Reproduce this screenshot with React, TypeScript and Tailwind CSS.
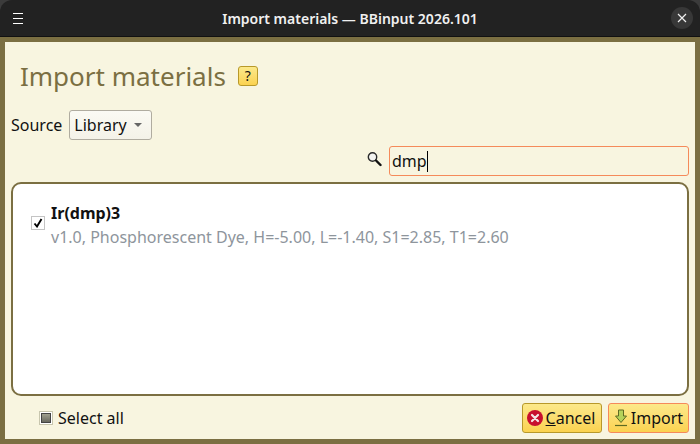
import React from 'react';

const font = { fontFamily: '"Noto Sans", sans-serif' };

const SearchIcon = () => (
  <svg width="16" height="16" viewBox="0 0 16 16" fill="none">
    <circle cx="6.5" cy="6" r="4.2" stroke="#2b2b2b" strokeWidth="1.4" fill="#f4f4f0" />
    <path d="M10 9.5 L14.5 14" stroke="#111" strokeWidth="2.4" strokeLinecap="round" />
  </svg>
);

const CancelIcon = () => (
  <svg width="16" height="16" viewBox="0 0 16 16">
    <circle cx="8" cy="8" r="8" fill="#c8102e" />
    <path d="M5 5 L11 11 M11 5 L5 11" stroke="#f4e6e6" strokeWidth="2.2" strokeLinecap="round" />
  </svg>
);

const ImportIcon = () => (
  <svg width="14" height="18" viewBox="0 0 14 18">
    <path d="M4.5 1 H9.5 V7 H12.5 L7 13.5 L1.5 7 H4.5 Z" fill="#b5d25a" stroke="#5e6b22" strokeWidth="1" />
    <path d="M1 16.5 H13" stroke="#5e6b22" strokeWidth="1.2" />
  </svg>
);

export default function App() {
  return (
    <div className="h-[444px] w-[700px] overflow-hidden bg-[#3b3b3b] text-[16px] text-[#111]" style={font}>
      {/* Title bar */}
      <div className="flex h-[37px] items-center justify-between rounded-t-[12px] border-b border-[#111] bg-[#222222] pl-[13px] pr-[7px]">
        <div className="w-[16px]">
          <div className="flex w-[10px] flex-col gap-[4px]">
            <div className="h-px bg-white" />
            <div className="h-px bg-white" />
            <div className="h-px bg-white" />
          </div>
        </div>
        <div className="text-[14px] font-semibold text-[#f0f0f0]">Import materials — BBinput 2026.101</div>
        <div className="flex h-[22px] w-[22px] items-center justify-center rounded-full bg-[#383838]">
          <svg width="10" height="10" viewBox="0 0 10 10">
            <path d="M1 1 L9 9 M9 1 L1 9" stroke="#f0f0f0" strokeWidth="1.2" />
          </svg>
        </div>
      </div>

      {/* Window content */}
      <div className="flex h-[407px] flex-col border-[5px] border-[#7b6f42] bg-[#f8f5e0] px-[6px]">
        <div className="mt-[14px] flex h-[40px] items-center pl-[9px]">
          <span className="text-[26px] leading-none text-[#7b6f42]">Import materials</span>
          <span className="ml-[12px] flex h-[20px] w-[20px] items-center justify-center rounded-[3px] border border-[#b8992a] bg-gradient-to-b from-[#fce98a] to-[#fbd24f] text-[14px] leading-none">
            ?
          </span>
        </div>

        <div className="mt-[14px] flex h-[30px] items-center">
          <span>Source</span>
          <div className="ml-[7px] flex h-[30px] w-[83px] items-center justify-between rounded-[3px] border border-[#b0aca0] bg-gradient-to-b from-[#fbfaf4] to-[#f4f2e8] pl-[4px] pr-[9px]">
            <span>Library</span>
            <svg width="8" height="4" viewBox="0 0 8 4">
              <path d="M0 0 H8 L4 4 Z" fill="#666" />
            </svg>
          </div>
        </div>

        <div className="mt-[6px] flex h-[30px] items-center justify-end">
          <div className="mb-[5px] mr-[7px]">
            <SearchIcon />
          </div>
          <div className="flex h-[30px] w-[300px] items-center rounded-[3px] border border-[#f58a5a] pl-[2px]">
            <span>dmp</span>
            <span className="h-[21px] w-px bg-black" />
          </div>
        </div>

        <div className="mt-[6px] h-[214px] rounded-[10px] border-2 border-[#7b6f42] bg-white pl-[18px] pt-[17px]">
          <div className="flex items-center gap-[6px]">
            <div className="mb-[5px] flex h-[14px] w-[14px] items-center justify-center border border-[#c4c4c4] bg-white">
              <svg width="10" height="10" viewBox="0 0 10 10">
                <path d="M1.5 5.5 L4 8.5 L8.5 1" fill="none" stroke="#000" strokeWidth="1.9" />
              </svg>
            </div>
            <div>
              <div className="text-[16px] font-bold leading-[24px]">Ir(dmp)3</div>
              <div className="text-[16px] leading-[24px] text-[#8e959c]">
                v1.0, Phosphorescent Dye, H=-5.00, L=-1.40, S1=2.85, T1=2.60
              </div>
            </div>
          </div>
        </div>

        <div className="mt-[7px] flex h-[30px] items-center justify-between">
          <div className="flex items-center pl-[28px]">
            <div className="flex h-[14px] w-[14px] items-center justify-center border border-[#c8c6ae] bg-white">
              <div className="h-[10px] w-[10px] border border-[#444] bg-gradient-to-b from-[#a0a090] to-[#6a6a60]" />
            </div>
            <span className="ml-[5px]">Select all</span>
          </div>
          <div className="flex gap-[6px]">
            <div className="flex h-[30px] w-[80px] items-center justify-center gap-[3px] rounded-[3px] border border-[#b8992a] bg-gradient-to-b from-[#fce98a] to-[#fbd24f] pr-[2px]">
              <CancelIcon />
              <span>
                <span className="underline">C</span>ancel
              </span>
            </div>
            <div className="flex h-[30px] w-[81px] items-center justify-center gap-[3px] rounded-[3px] border border-[#f58a5a] bg-gradient-to-b from-[#fce98a] to-[#fbd24f]">
              <ImportIcon />
              <span>Import</span>
            </div>
          </div>
        </div>
      </div>
    </div>
  );
}
